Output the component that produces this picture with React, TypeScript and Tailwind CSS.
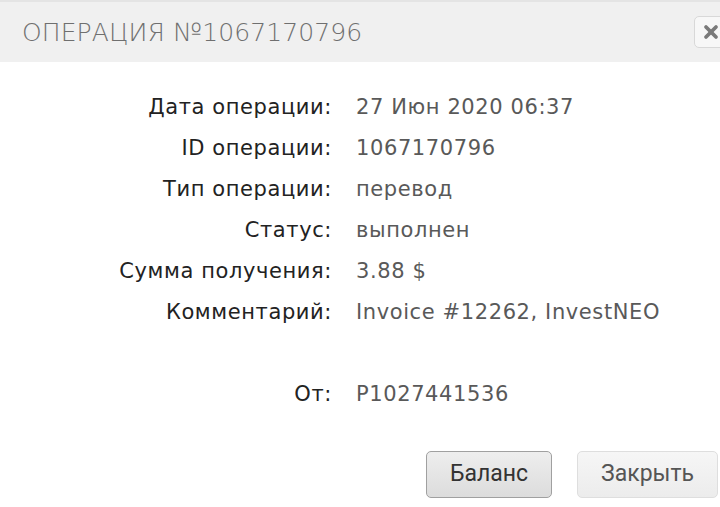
import { X } from "lucide-react"

interface Row {
  label: string
  value: string
}

const rows: Row[] = [
  { label: "Дата операции:", value: "27 Июн 2020 06:37" },
  { label: "ID операции:", value: "1067170796" },
  { label: "Тип операции:", value: "перевод" },
  { label: "Статус:", value: "выполнен" },
  { label: "Сумма получения:", value: "3.88 $" },
  { label: "Комментарий:", value: "Invoice #12262, InvestNEO" },
  { label: "", value: "" },
  { label: "От:", value: "P1027441536" },
]

export default function App() {
  return (
    <div className="w-[720px] h-[507px] bg-white overflow-hidden flex flex-col">
      <div className="h-[62px] shrink-0 bg-[#f0f0f0] border-t-2 border-[#e4e4e4] flex items-center pl-[22px] overflow-hidden">
        <h1 className="text-[25px] tracking-[0.1px] text-[#6f6f6f] font-['DejaVu_Sans',sans-serif] font-light leading-none">
          ОПЕРАЦИЯ №1067170796
        </h1>
        <button className="ml-auto mr-[-12px] w-[38px] h-[32px] rounded-[5px] border border-[#d8d8d8] bg-[#f7f7f7] flex items-center pl-[6px]">
          <X className="w-[20px] h-[20px] text-[#7a7a7a]" strokeWidth={4.5} />
        </button>
      </div>

      <div className="pt-[25px] grid grid-cols-[332px_1fr] gap-x-[24px] font-['DejaVu_Sans',sans-serif] text-[21px] tracking-[0.6px]">
        {rows.map((row, i) => (
          <div key={i} className="contents">
            <div className="h-[41px] flex items-center justify-end text-[#222]">{row.label}</div>
            <div className="h-[41px] flex items-center text-[#595959]">{row.value}</div>
          </div>
        ))}
      </div>

      <div className="mt-auto mb-[9px] flex justify-end gap-[25px] pr-[2px] font-['Roboto',sans-serif] text-[23px]">
        <button className="w-[126px] h-[47px] rounded-[5px] border border-[#a0a0a0] bg-gradient-to-b from-[#eeeeee] to-[#dcdcdc] text-[#333]">
          Баланс
        </button>
        <button className="w-[141px] h-[47px] rounded-[5px] border border-[#dedede] bg-gradient-to-b from-[#f6f6f6] to-[#ececec] text-[#555]">
          Закрыть
        </button>
      </div>
    </div>
  )
}
